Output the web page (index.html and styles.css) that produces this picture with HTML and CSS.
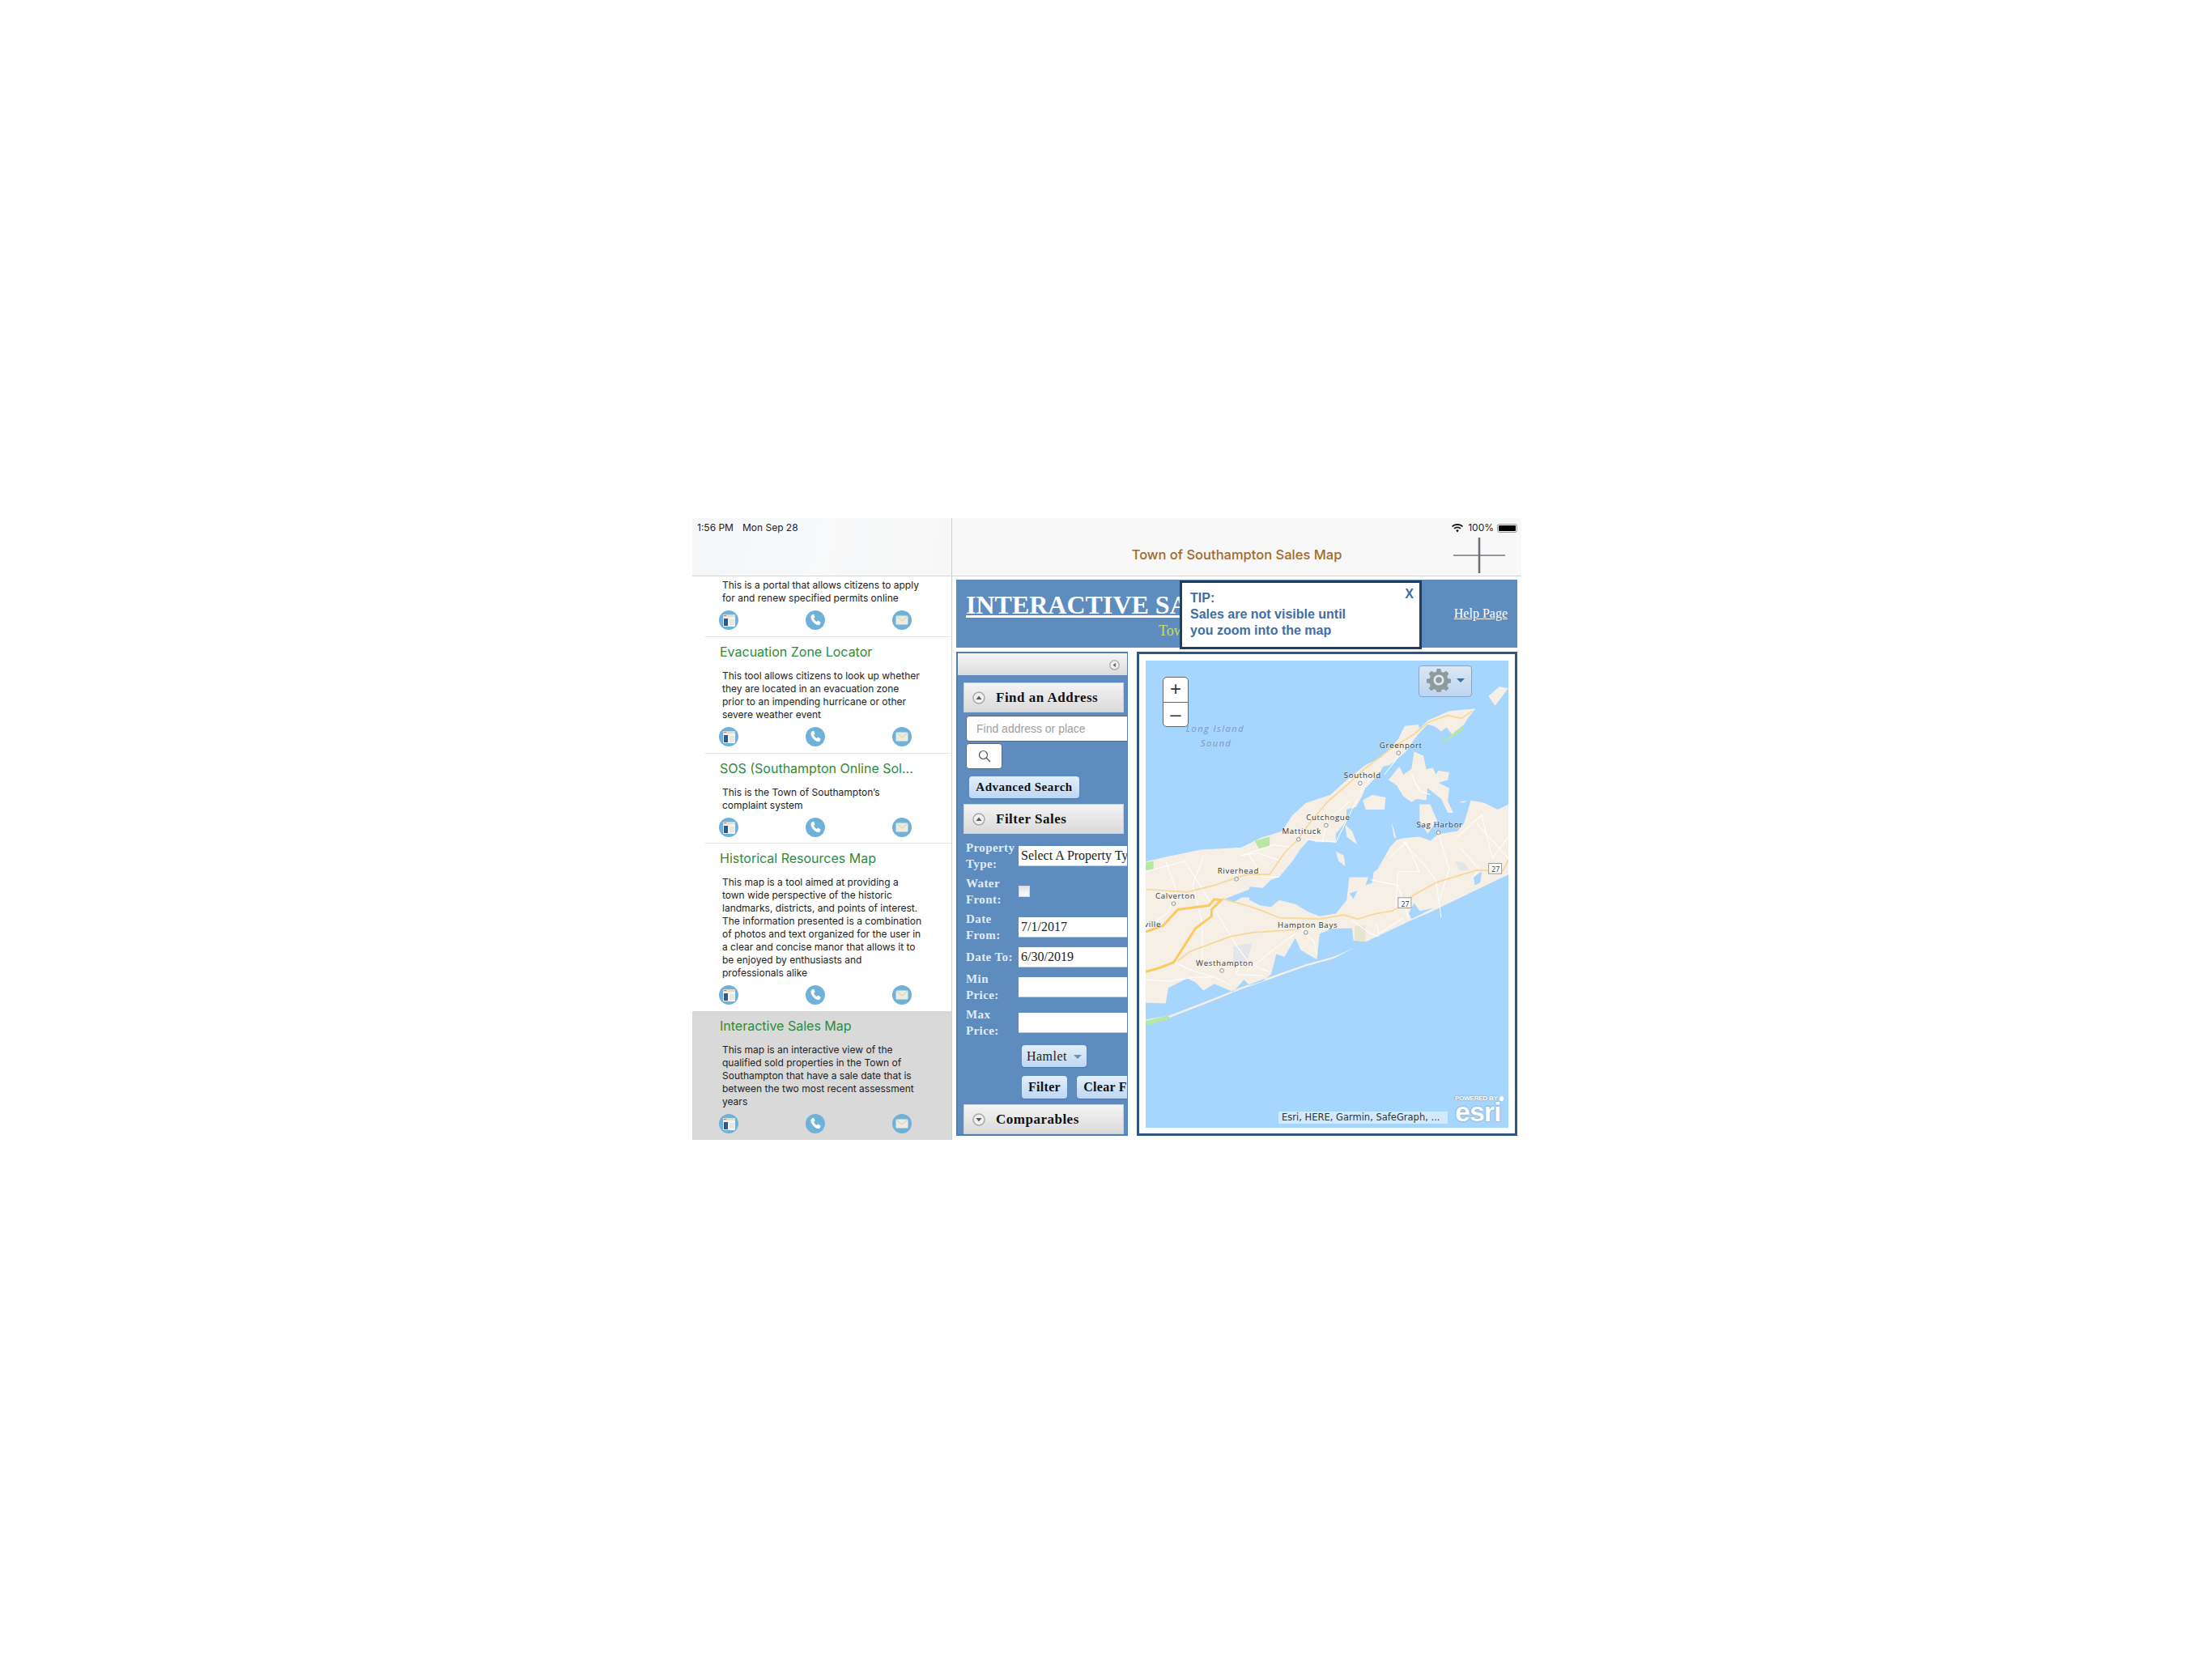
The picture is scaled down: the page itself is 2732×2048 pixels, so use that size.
FILE: index.html
```html
<!DOCTYPE html>
<html lang="en">
<head>
    <meta charset="UTF-8">
    <title>Town of Southampton Sales Map</title>
    <link rel="stylesheet" href="styles.css">
</head>
<body>
<svg class="defs" width="0" height="0">
    <symbol id="ico-web" viewBox="0 0 24 24">
        <circle cx="12" cy="12" r="12" fill="#6fb1d8"/>
        <rect x="5" y="5" width="15" height="15" rx="1" fill="#f6f5ee"/>
        <rect x="5" y="5" width="15" height="3" fill="#e6dcc4"/>
        <rect x="6" y="6" width="3" height="1" fill="#d9694f"/>
        <rect x="6" y="10" width="5" height="9" fill="#3d5680"/>
        <rect x="13" y="11" width="6" height="7" fill="#e8e8e0"/>
    </symbol>
    <symbol id="ico-phone" viewBox="0 0 24 24">
        <circle cx="12" cy="12" r="12" fill="#6fb1d8"/>
        <path d="M7.500 5.500l2.600-.8 1.600 3.600-1.700 1.300c.6 2 1.900 3.500 3.800 4.400l1.600-1.500 3.300 2.200-1 2.500c-.5 1-1.600 1.100-2.700.8-4.400-1.300-7.600-4.800-8.500-9.300-.2-1.300.1-2.300 1-2.700z" fill="#fff"/>
    </symbol>
    <symbol id="ico-mail" viewBox="0 0 24 24">
        <circle cx="12" cy="12" r="12" fill="#6fb1d8"/>
        <rect x="4.500" y="6.500" width="15" height="11" rx="1" fill="#ecebdd"/>
        <path d="M5 7l7 6 7-6" fill="none" stroke="#cfcdb8" stroke-width="1"/>
    </symbol>
    <symbol id="ico-up" viewBox="0 0 16 16">
        <circle cx="8" cy="8" r="7" fill="#f1f1f1" stroke="#a9a9a9" stroke-width="1.500"/>
        <path d="M4.500 10L8 5.500 11.500 10z" fill="#5a5a5a"/>
    </symbol>
    <symbol id="ico-down" viewBox="0 0 16 16">
        <circle cx="8" cy="8" r="7" fill="#f1f1f1" stroke="#a9a9a9" stroke-width="1.500"/>
        <path d="M4.500 6L8 10.500 11.500 6z" fill="#5a5a5a"/>
    </symbol>
    <symbol id="ico-left" viewBox="0 0 16 16">
        <circle cx="8" cy="8" r="7" fill="#f1f1f1" stroke="#a9a9a9" stroke-width="1.500"/>
        <path d="M10 4.500L5.500 8 10 11.500z" fill="#6a6a6a"/>
    </symbol>
</svg>

<div class="device">
    <!-- left list -->
    <div class="sidebar">
        <div class="side-head"><span class="clock">1:56 PM</span><span>Mon Sep 28</span></div>
        <div class="list">
            <div class="row row-first">
                <p class="desc">This is a portal that allows citizens to apply<br>for and renew specified permits online</p>
                <div class="icons">
                    <svg><use href="#ico-web"/></svg><svg><use href="#ico-phone"/></svg><svg><use href="#ico-mail"/></svg>
                </div>
            </div>
            <div class="row">
                <h3>Evacuation Zone Locator</h3>
                <p class="desc">This tool allows citizens to look up whether<br>they are located in an evacuation zone<br>prior to an impending hurricane or other<br>severe weather event</p>
                <div class="icons">
                    <svg><use href="#ico-web"/></svg><svg><use href="#ico-phone"/></svg><svg><use href="#ico-mail"/></svg>
                </div>
            </div>
            <div class="row row-short">
                <h3>SOS (Southampton Online Sol...</h3>
                <p class="desc">This is the Town of Southampton’s<br>complaint system</p>
                <div class="icons">
                    <svg><use href="#ico-web"/></svg><svg><use href="#ico-phone"/></svg><svg><use href="#ico-mail"/></svg>
                </div>
            </div>
            <div class="row row-last">
                <h3>Historical Resources Map</h3>
                <p class="desc">This map is a tool aimed at providing a<br>town wide perspective of the historic<br>landmarks, districts, and points of interest.<br>The information presented is a combination<br>of photos and text organized for the user in<br>a clear and concise manor that allows it to<br>be enjoyed by enthusiasts and<br>professionals alike</p>
                <div class="icons">
                    <svg><use href="#ico-web"/></svg><svg><use href="#ico-phone"/></svg><svg><use href="#ico-mail"/></svg>
                </div>
            </div>
            <div class="row row-last current">
                <h3>Interactive Sales Map</h3>
                <p class="desc">This map is an interactive view of the<br>qualified sold properties in the Town of<br>Southampton that have a sale date that is<br>between the two most recent assessment<br>years</p>
                <div class="icons">
                    <svg><use href="#ico-web"/></svg><svg><use href="#ico-phone"/></svg><svg><use href="#ico-mail"/></svg>
                </div>
            </div>
        </div>
    </div>

    <!-- right side -->
    <div class="detail">
        <div class="nav">
            <div class="status">
                <svg class="wifi" width="14" height="11" viewBox="0 0 14 11">
                    <path d="M0.500 3.500a9.200 9.200 0 0 1 13 0" fill="none" stroke="#111" stroke-width="1.700"/>
                    <path d="M3 6a5.700 5.700 0 0 1 8 0" fill="none" stroke="#111" stroke-width="1.700"/>
                    <path d="M5.200 8.200a2.600 2.600 0 0 1 3.600 0L7 10.500z" fill="#111"/>
                </svg>
                <span>100%</span>
                <span class="battery"><i></i></span>
            </div>
            <div class="nav-title">Town of Southampton Sales Map</div>
            <svg class="plus" width="64" height="44" viewBox="0 0 64 44">
                <path d="M0 22H64" stroke="#74767f" stroke-width="1.500"/>
                <path d="M32 0V44" stroke="#6c6e78" stroke-width="2.500"/>
            </svg>
        </div>
        <div class="content">
            <div class="banner">
                <div class="banner-text">
                    <h1>INTERACTIVE SALES MAP</h1>
                    <div class="subtitle">Town of Southampton</div>
                </div>
                <a class="help" href="#">Help Page</a>
                <div class="tip">
                    <span class="tip-x">X</span>
                    TIP:<br>Sales are not visible until<br>you zoom into the map
                </div>
            </div>
            <div class="panels">
                <div class="tools">
                    <div class="tools-top"><svg width="13" height="13"><use href="#ico-left"/></svg></div>

                    <div class="sec-head"><svg><use href="#ico-up"/></svg>Find an Address</div>
                    <div class="search-box">Find address or place</div>
                    <div class="search-btn">
                        <svg width="16" height="16" viewBox="0 0 16 16">
                            <circle cx="6.500" cy="6.500" r="5" fill="none" stroke="#555" stroke-width="1.200"/>
                            <path d="M10 10l5 5" stroke="#555" stroke-width="1.200"/>
                        </svg>
                    </div>
                    <div class="btn btn-adv">Advanced Search</div>

                    <div class="sec-head"><svg><use href="#ico-up"/></svg>Filter Sales</div>
                    <div class="form">
                        <div class="form-row"><label>Property Type:</label><input type="text" value="Select A Property Type"></div>
                        <div class="form-row"><label>Water Front:</label><span class="check"></span></div>
                        <div class="form-row"><label>Date From:</label><input type="text" value="7/1/2017"></div>
                        <div class="form-row form-row-one"><label>Date To:</label><input type="text" value="6/30/2019"></div>
                        <div class="form-row"><label>Min Price:</label><input type="text"></div>
                        <div class="form-row"><label>Max Price:</label><input type="text"></div>
                    </div>
                    <div class="btn btn-hamlet">Hamlet<span class="caret"></span></div>
                    <div class="btn-line">
                        <div class="btn btn-filter">Filter</div>
                        <div class="btn btn-clear">Clear Filter</div>
                    </div>
                    <div class="sec-head sec-last"><svg><use href="#ico-down"/></svg>Comparables</div>
                </div>

                <div class="map-frame">
                    <div class="map">
                        <svg class="map-svg" width="448" height="577" viewBox="46 48 1343 1730">
                            <!-- land -->
                            <path class="land" d="M46 792 120 775 250 748 400 740 470 705 550 680 590 620 640 575 730 545 790 490 860 435 920 405 980 340 1005 290 1055 285 1060 300 1090 270 1170 235 1268 226 1240 260 1225 285 1180 320 1160 295 1140 310 1115 290 1090 285 1060 315 1040 340 1010 385 980 410 950 435 925 440 915 460 880 500 860 520 845 555 825 590 790 600 790 640 750 690 750 720 680 720 650 712 620 745 590 790 540 850 510 860 480 890 430 885 430 935 470 955 510 960 540 935 600 950 650 980 690 995 750 985 790 935 800 850 870 850 905 820 950 740 975 712 1000 705 1060 700 1100 715 1130 690 1200 680 1225 650 1250 565 1300 575 1350 600 1389 580 1389 840 1100 980 1030 1010 880 1080 740 1152 640 1180 500 1230 400 1265 290 1310 135 1370 130 1365 46 1385 46 1400z"/>
                            <path class="land" d="M945 490 985 440 1000 470 1030 450 1040 385 1075 400 1085 450 1110 445 1120 470 1130 455 1170 462 1165 490 1130 500 1170 520 1165 570 1185 612 1165 612 1140 560 1090 520 1085 565 1050 560 1030 572 1000 550 975 510z"/>
                            <path class="land" d="M850 565 885 545 935 555 930 600 860 600z"/>
                            <path class="land" d="M1315 180 1355 145 1389 150 1340 215z"/>
                            <path class="land" d="M750 755 780 770 785 810 760 790z"/>
                            <path class="land" d="M785 655 810 680 830 730 790 700z"/>
                            <path class="land" d="M955 640 975 710 965 700z"/>
                            <path class="land" d="M1060 580 1100 580 1125 640 1090 690 1060 640z"/>
                            <path class="land" d="M1205 572 1235 566 1225 574z"/>
                            <!-- south bays -->
                            <path class="water" d="M46 1315 120 1318 130 1260 200 1225 230 1240 260 1270 300 1245 370 1275 410 1230 430 1250 480 1235 510 1210 530 1135 560 1145 600 1075 620 1120 680 1155 690 1060 740 1040 810 1040 815 1085 870 1090 740 1145 640 1172 500 1222 400 1258 290 1302 135 1362 46 1378z"/>
                            <path class="water" d="M1020 985 1040 945 1060 975 1110 965 1030 1005z"/>
                            <path class="water" d="M1260 850 1290 830 1285 870 1265 880z"/>
                            <path class="water" d="M870 850 890 830 885 870 860 880z"/>
                            <path class="water" d="M340 930 430 895 440 925 400 925 370 945z"/>
                            <path class="water" d="M800 910 830 900 815 930z"/>
                            <!-- parks -->
                            <path class="green" d="M450 715 505 700 505 735 465 745z"/>
                            <path class="green" d="M46 795 75 790 75 820 46 825z"/>
                            <path class="green" d="M1130 360 1180 320 1225 290 1225 300 1190 325 1140 355z"/>
                            <path class="green" d="M46 1382 130 1362 130 1376 46 1400z"/>
                            <path class="grey" d="M1190 790 1225 795 1245 825 1210 825z"/>
                            <path class="grey" d="M370 1105 440 1095 420 1165 370 1165z"/>
                            <path class="sage" d="M820 1030 860 1030 860 1090 820 1085z"/>
                            <!-- small roads -->
                            <g class="roads">
                                <polyline points="46 830 190 790 260 900 320 1000 380 1100 430 1170 500 1200"/>
                                <polyline points="120 790 160 900 130 980 46 1040"/>
                                <polyline points="260 770 220 880 255 1020 255 1180"/>
                                <polyline points="430 770 480 850 540 850"/>
                                <polyline points="590 740 520 730 400 770 460 760 550 790"/>
                                <polyline points="640 710 750 720 830 560"/>
                                <polyline points="800 570 720 640 700 720"/>
                                <polyline points="880 480 840 540 860 450"/>
                                <polyline points="930 470 970 420 980 400"/>
                                <polyline points="1030 470 1060 530 1100 545"/>
                                <polyline points="1000 720 1090 820 1120 860 1140 1000"/>
                                <polyline points="950 780 1010 720 1060 830 980 830 970 980"/>
                                <polyline points="880 860 980 880 1020 1000"/>
                                <polyline points="1130 690 1170 820 1130 950"/>
                                <polyline points="1200 700 1290 620 1330 780 1389 700"/>
                                <polyline points="1270 650 1389 780"/>
                                <polyline points="1210 740 1280 820 1260 850"/>
                                <polyline points="620 1040 670 1090 680 1140"/>
                                <polyline points="600 1060 530 1110 420 1200"/>
                                <polyline points="810 1010 880 1060 910 1070"/>
                                <polyline points="900 1020 910 1060 1000 1000"/>
                                <polyline points="46 1230 130 1235 230 1220 300 1220 360 1250"/>
                                <polyline points="150 1165 230 1200 300 1220"/>
                                <polyline points="400 1160 380 1210 480 1215"/>
                            </g>
                            <!-- highways -->
                            <g class="roads-mid">
                                <polyline points="1255 235 1215 262 1165 250 1095 275 1040 320 960 370 855 450 790 510 720 570 660 640 610 710 560 760 505 840 420 840 300 880 200 905 46 895"/>
                                <polyline points="1389 785 1370 825 1270 825 1120 870 1040 915 1000 950 960 975 900 985 830 1005 780 990 690 1005 540 1000 480 975 420 955 330 930"/>
                                <polyline points="600 1045 440 1055 360 1070 210 1125 165 1160"/>
                            </g>
                            <polyline class="road-big" points="46 1053 110 1030 165 970 280 955 300 932 325 935 290 970 290 995 230 1040 150 1165 100 1185 46 1200"/>
                            <!-- towns -->
                            <g class="dots">
                                <circle cx="982" cy="390" r="7"/><circle cx="840" cy="502" r="7"/>
                                <circle cx="714" cy="658" r="7"/><circle cx="612" cy="710" r="7"/>
                                <circle cx="1130" cy="685" r="7"/><circle cx="382" cy="857" r="7"/>
                                <circle cx="149" cy="948" r="7"/><circle cx="639" cy="1055" r="7"/>
                                <circle cx="328" cy="1196" r="7"/>
                            </g>
                            <g class="labels">
                                <text x="912" y="371">Greenport</text>
                                <text x="780" y="483">Southold</text>
                                <text x="640" y="639">Cutchogue</text>
                                <text x="551" y="691">Mattituck</text>
                                <text x="1049" y="665">Sag Harbor</text>
                                <text x="312" y="837">Riverhead</text>
                                <text x="82" y="929">Calverton</text>
                                <text x="535" y="1036">Hampton Bays</text>
                                <text x="232" y="1177">Westhampton</text>
                                <text x="103" y="1035" text-anchor="end">Manorville</text>
                            </g>
                            <g class="water-label">
                                <text x="195" y="311">Long Island</text>
                                <text x="250" y="365">Sound</text>
                            </g>
                            <g class="shield">
                                <rect x="1316" y="799" width="48" height="38"/><text x="1342" y="831">27</text>
                                <rect x="981" y="926" width="48" height="38"/><text x="1007" y="958">27</text>
                            </g>
                        </svg>

                        <div class="zoom">
                            <div class="zoom-btn">+</div>
                            <div class="zoom-btn">–</div>
                        </div>

                        <div class="gear-btn">
                            <svg width="30" height="30" viewBox="0 0 32 32">
                                <path class="gear" d="M13.500 1h5l.8 4 3 1.200 3.400-2.300 3.500 3.500-2.300 3.400 1.200 3 4 .8v5l-4 .8-1.200 3 2.300 3.400-3.500 3.500-3.400-2.300-3 1.200-.8 4h-5l-.8-4-3-1.200-3.400 2.300-3.500-3.500 2.300-3.400-1.200-3-4-.8v-5l4-.8 1.200-3-2.300-3.400 3.500-3.500 3.400 2.300 3-1.200z"/>
                                <circle cx="16" cy="16" r="7" fill="#dfe8f0"/>
                                <circle cx="16" cy="16" r="4" fill="#8e9a9c"/>
                            </svg>
                            <span class="gear-caret"></span>
                        </div>

                        <div class="attrib">Esri, HERE, Garmin, SafeGraph, ...</div>
                        <div class="esri">
                            <div class="esri-by">POWERED BY<i></i></div>
                            <div class="esri-name">esri</div>
                        </div>
                    </div>
                </div>
            </div>
        </div>
    </div>
</div>
</body>
</html>
```

FILE: styles.css
```css
* {
    box-sizing: border-box;
    margin: 0;
    padding: 0;
}

body {
    background: #fff;
    padding: 640px 0 0 855px;
    font-family: Inter, "Liberation Sans", sans-serif;
}

.defs {
    position: absolute;
}

.device {
    width: 1024px;
    height: 768px;
    display: flex;
    overflow: hidden;
}

/* left list */
.sidebar {
    width: 321px;
    border-right: 1px solid #cfcfd2;
    flex-shrink: 0;
}

.side-head {
    height: 72px;
    padding: 4px 0 0 6px;
    font-size: 12px;
    line-height: 16px;
    color: #222;
    background: linear-gradient(100deg, #f5f6f7, #f8f9fa 50%, #f7f7f7);
    border-bottom: 1px solid #d6d6d8;
}

.clock {
    margin-right: 11px;
}

.row {
    margin-left: 16px;
    padding: 7px 0 8px 18px;
    border-bottom: 1px solid #e4e4e6;
}

.row h3 {
    font-size: 16px;
    line-height: 22px;
    font-weight: 400;
    color: #2f8a3c;
    white-space: nowrap;
}

.desc {
    margin: 11px 0 7px 3px;
    font-size: 12px;
    line-height: 16px;
    color: #222;
    white-space: nowrap;
}

.row-first {
    padding-top: 3px;
}

.row-first .desc {
    margin-top: 0;
}

.row-short {
    padding-bottom: 7px;
}

.row-last {
    border-bottom: 0;
}

.current {
    margin-left: 0;
    padding-left: 34px;
    background: #d9d9d9;
}

.icons {
    display: flex;
    gap: 83px;
    height: 24px;
    margin-left: -1px;
}

.icons svg {
    width: 24px;
    height: 24px;
}

/* right side */
.detail {
    flex: 1;
    background: #fff;
}

.nav {
    height: 72px;
    position: relative;
    display: flex;
    align-items: center;
    justify-content: center;
    background: #f8f8f8;
    border-bottom: 1px solid #d6d6d8;
    padding: 19px 0 0 0;
}

.nav-title {
    font-size: 16.500px;
    font-weight: 500;
    color: #a5682c;
}

.status {
    position: absolute;
    top: 4px;
    right: 5px;
    display: flex;
    align-items: center;
    gap: 6px;
    font-size: 12px;
    line-height: 16px;
    color: #222;
}

.battery {
    width: 25px;
    height: 11px;
    padding: 1px;
    border: 1px solid #9a9a9a;
    border-radius: 3px;
    margin-left: -2px;
}

.battery i {
    display: block;
    height: 100%;
    background: #000;
    border-radius: 1px;
}

.plus {
    position: absolute;
    top: 24px;
    right: 20px;
}

.content {
    padding: 4px 5px 0;
}

.banner {
    height: 84px;
    position: relative;
    display: flex;
    justify-content: space-between;
    background: #5e8cbf;
    color: #fff;
}

.banner-text {
    padding: 12px 0 0 12px;
}

.banner h1 {
    font-family: "Liberation Serif", serif;
    font-size: 32px;
    line-height: 38px;
    font-weight: 700;
    text-decoration: underline;
    white-space: nowrap;
}

.subtitle {
    margin: 2px 0 0 238px;
    font-family: "Liberation Serif", serif;
    font-size: 18px;
    line-height: 22px;
    color: #c9dc6c;
    white-space: nowrap;
}

.help {
    margin: 32px 12px 0 0;
    font-family: "Liberation Serif", serif;
    font-size: 16px;
    line-height: 20px;
    color: #fff;
}

.tip {
    position: absolute;
    left: 276px;
    top: 1px;
    width: 299px;
    height: 85px;
    padding: 9px 10px;
    background: #fff;
    border: 3px solid #233f60;
    font-family: "Liberation Sans", sans-serif;
    font-size: 16px;
    line-height: 20px;
    font-weight: 700;
    color: #3f6ea5;
}

.tip-x {
    position: absolute;
    top: 4px;
    right: 7px;
    font-size: 16px;
}

.panels {
    display: flex;
    gap: 11px;
    margin-top: 5px;
}

.tools {
    width: 212px;
    height: 598px;
    overflow: hidden;
    border: 2px solid #4f7fb6;
    border-right-width: 1px;
    background: #5e8cbf;
}

.tools-top {
    height: 27px;
    padding: 5px 9px 0 0;
    text-align: right;
    background: linear-gradient(#f5f5f5, #dcdcdc);
}

.sec-head {
    width: 198px;
    height: 37px;
    margin: 7px 0 0 7px;
    display: flex;
    align-items: center;
    padding: 1px 0 0 10px;
    background: linear-gradient(#f4f4f4, #dadada);
    border: 1px solid #c8d2de;
    font-family: "Liberation Serif", serif;
    font-size: 17px;
    font-weight: 700;
    letter-spacing: .5px;
    color: #111;
}

.tools-top + .sec-head {
    margin-top: 9px;
}

.sec-head svg {
    width: 16px;
    height: 16px;
    margin: -1px 13px 0 0;
}

.search-box {
    width: 210px;
    height: 32px;
    margin: 4px 0 0 10px;
    padding-left: 12px;
    border: 1px solid #666;
    border-radius: 4px 0 0 4px;
    background: #fff;
    font-family: "Liberation Sans", sans-serif;
    font-size: 14px;
    line-height: 30px;
    color: #a0a0a0;
}

.search-btn {
    width: 45px;
    height: 32px;
    margin: 2px 0 0 10px;
    padding: 7px 0 0 14px;
    border: 1px solid #666;
    border-radius: 4px;
    background: #fff;
}

.btn {
    height: 27px;
    border-radius: 4px;
    background: linear-gradient(#e4effb, #bcd7f5);
    box-shadow: 0 1px 1px #4a76a8;
    font-family: "Liberation Serif", serif;
    font-size: 15px;
    font-weight: 700;
    line-height: 27px;
    letter-spacing: .5px;
    color: #111;
    text-align: center;
    white-space: nowrap;
}

.btn-adv {
    width: 136px;
    margin: 9px 0 0 14px;
}

.form {
    margin: 7px 0 0 10px;
    display: flex;
    flex-direction: column;
    gap: 4px;
}

.form-row {
    display: flex;
    align-items: center;
    height: 40px;
}

.form-row-one {
    height: 26px;
}

.form-row label {
    width: 65px;
    flex-shrink: 0;
    font-family: "Liberation Serif", serif;
    font-size: 15px;
    font-weight: 700;
    line-height: 20px;
    letter-spacing: .4px;
    color: #e2ebf6;
}

.form-row input {
    width: 180px;
    height: 25px;
    flex-shrink: 0;
    padding-left: 3px;
    border: 0;
    border-bottom: 1px solid #b9cbe0;
    background: #fff;
    font-family: "Liberation Serif", serif;
    font-size: 16px;
    color: #222;
}

.check {
    width: 14px;
    height: 14px;
    background: linear-gradient(#dfe3e8, #fbfbfb);
    border: 1px solid #cfd8e3;
}

.btn-hamlet {
    width: 80px;
    margin: 8px 0 0 79px;
    font-weight: 400;
    letter-spacing: .5px;
    font-size: 16px;
    color: #222;
}

.caret {
    display: inline-block;
    margin: 0 0 2px 8px;
    border-left: 5px solid transparent;
    border-right: 5px solid transparent;
    border-top: 5px solid #6e8fb4;
}

.btn-line {
    display: flex;
    gap: 12px;
    margin: 11px 0 0 79px;
}

.btn-line .btn {
    height: 28px;
    font-size: 16px;
    letter-spacing: .3px;
}

.btn-filter {
    width: 56px;
    flex-shrink: 0;
}

.btn-clear {
    width: 100px;
    flex-shrink: 0;
}

.sec-last {
    margin-top: 7px;
}

/* map */
.map-frame {
    width: 470px;
    height: 598px;
    padding: 8px 8px 7px;
    border: 3px solid #2f5786;
    background: #fff;
}

.map {
    width: 448px;
    height: 577px;
    position: relative;
    overflow: hidden;
    background: #a6d5fd;
}

.map-svg {
    display: block;
}

.land {
    fill: #f5efe6;
}

.water {
    fill: #a6d5fd;
}

.green {
    fill: #b7e8a2;
}

.grey {
    fill: #e3e6e8;
}

.sage {
    fill: #e5e5d0;
}

.roads polyline {
    fill: none;
    stroke: #fff;
    stroke-width: 3;
}

.roads-mid polyline {
    fill: none;
    stroke: #f9d795;
    stroke-width: 5;
}

.road-big {
    fill: none;
    stroke: #fcc962;
    stroke-width: 9;
}

.dots circle {
    fill: #fff;
    stroke: #777;
    stroke-width: 2.500;
}

.labels text {
    font-family: "Open Sans", sans-serif;
    font-size: 29px;
    letter-spacing: 2px;
    fill: #333;
    stroke: #fff;
    stroke-width: 3;
    stroke-opacity: .5;
    paint-order: stroke;
}

.water-label text {
    font-family: "Open Sans", sans-serif;
    font-size: 33px;
    font-style: italic;
    letter-spacing: 4.500px;
    fill: #7a96bd;
}

.shield rect {
    fill: #fff;
    stroke: #999;
    stroke-width: 3;
}

.shield text {
    font-family: "Open Sans", sans-serif;
    font-size: 26px;
    text-anchor: middle;
    fill: #333;
}

.zoom {
    position: absolute;
    left: 21px;
    top: 20px;
    width: 32px;
    height: 62px;
    border: 1px solid #666;
    border-radius: 5px;
    background: #fff;
}

.zoom-btn {
    height: 30px;
    text-align: center;
    font-family: "Liberation Sans", sans-serif;
    font-size: 24px;
    line-height: 28px;
    color: #333;
}

.zoom-btn + .zoom-btn {
    border-top: 1px solid #666;
}

.gear-btn {
    position: absolute;
    left: 337px;
    top: 6px;
    width: 66px;
    height: 39px;
    padding: 2px 0 0 9px;
    display: flex;
    border: 1px solid #87a6c8;
    border-radius: 4px;
    background: linear-gradient(#dce8f4, #bcd5f0);
}

.gear {
    fill: #8e9a9c;
}

.gear-caret {
    margin: 13px 0 0 7px;
    width: 0;
    height: 0;
    border-left: 5px solid transparent;
    border-right: 5px solid transparent;
    border-top: 5px solid #3f6f9f;
}

.attrib {
    position: absolute;
    left: 164px;
    top: 557px;
    width: 209px;
    height: 15px;
    padding-left: 4px;
    background: rgba(255, 255, 255, .5);
    font-family: "DejaVu Sans", sans-serif;
    font-size: 11.500px;
    line-height: 15px;
    color: #333;
    white-space: nowrap;
}

.esri {
    position: absolute;
    left: 382px;
    top: 536px;
    width: 60px;
    color: #fff;
    font-family: "Liberation Sans", sans-serif;
    font-weight: 700;
    text-shadow: 0 0 2px #5d87ad;
}

.esri-by {
    display: flex;
    align-items: center;
    gap: 2px;
    font-size: 8px;
    line-height: 9px;
    letter-spacing: -.2px;
    white-space: nowrap;
}

.esri-by i {
    width: 6px;
    height: 6px;
    border-radius: 50%;
    background: #fff;
}

.esri-name {
    font-size: 34px;
    line-height: 24px;
    letter-spacing: -1px;
}
```
